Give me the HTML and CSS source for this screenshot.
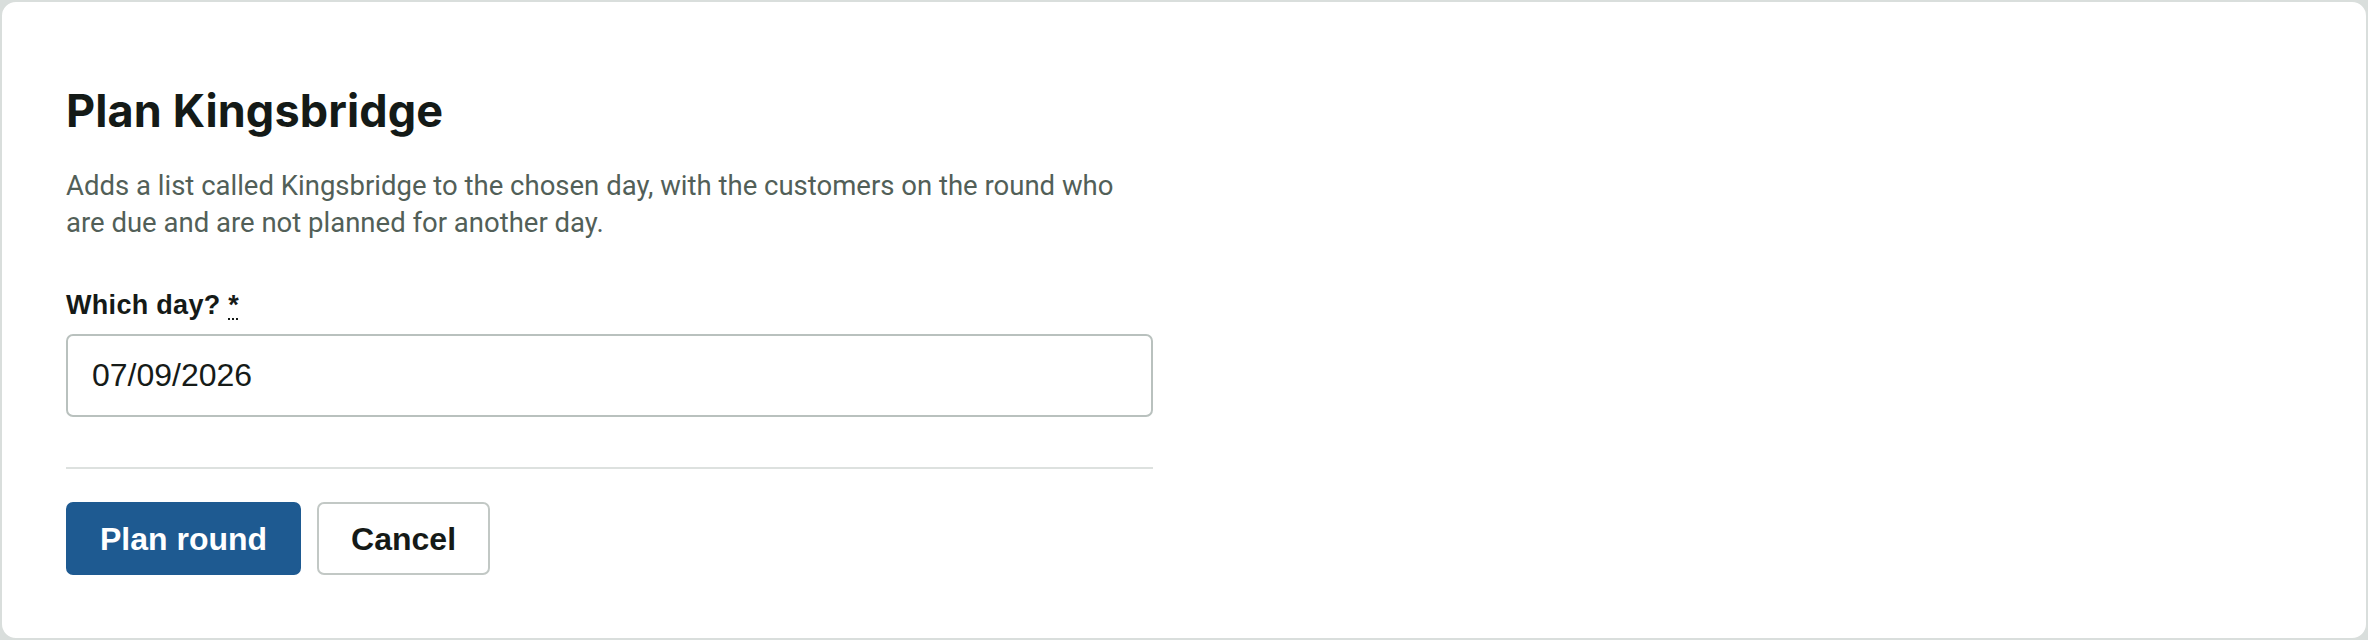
FILE: index.html
```html
<!DOCTYPE html>
<html lang="en">
<head>
<meta charset="utf-8">
<title>Plan Kingsbridge</title>
<link rel="stylesheet" href="styles.css">
</head>
<body>
<main class="card">
  <form class="form">
    <h1 class="title">Plan Kingsbridge</h1>
    <p class="lead">Adds a list called Kingsbridge to the chosen day, with the customers on the round who are due and are not planned for another day.</p>
    <div class="field">
      <label class="label" for="day">Which day? <abbr title="required">*</abbr></label>
      <input class="input" id="day" type="text" value="07/09/2026">
    </div>
    <hr class="rule">
    <div class="actions">
      <button type="button" class="btn btn-primary">Plan round</button>
      <button type="button" class="btn btn-secondary">Cancel</button>
    </div>
  </form>
</main>
</body>
</html>
```
FILE: styles.css
```css
html, body {
  margin: 0;
  padding: 0;
  background: #d9dedc;
}
body {
  font-family: Roboto, "Liberation Sans", Arial, sans-serif;
  color: #151a17;
}
.card {
  box-sizing: border-box;
  height: 640px;
  background: #ffffff;
  border: 2px solid #d9dedc;
  border-radius: 16px;
  padding: 82px 64px 0;
}
.form {
  display: flex;
  flex-direction: column;
  width: 1087px;
}
.title {
  margin: 0;
  font-family: Inter, "Liberation Sans", sans-serif;
  font-weight: 700;
  font-size: 45px;
  line-height: 53px;
  letter-spacing: 0.1px;
  color: #141a17;
}
.lead {
  margin: 30px 0 0;
  font-size: 27.5px;
  line-height: 37px;
  color: #525f58;
}
.field {
  display: flex;
  flex-direction: column;
  margin-top: 46px;
  gap: 10px;
}
.label {
  font-family: "Liberation Sans", Arial, sans-serif;
  font-size: 27px;
  line-height: 37px;
  font-weight: 700;
  letter-spacing: 0.3px;
  color: #151a17;
}
.label abbr {
  text-decoration: underline dotted;
  text-decoration-thickness: 2px;
  text-underline-offset: 4px;
  cursor: help;
}
.input {
  box-sizing: border-box;
  height: 83px;
  width: 100%;
  margin: 0;
  padding: 0 24px;
  border: 2px solid #b9c1be;
  border-radius: 7px;
  background: #fff;
  font-family: "Liberation Sans", Arial, sans-serif;
  font-size: 32px;
  color: #161b18;
  outline: none;
}
.rule {
  width: 100%;
  margin: 50px 0 0;
  border: 0;
  height: 2px;
  background: #dde1df;
}
.actions {
  display: flex;
  gap: 16px;
  margin-top: 33px;
}
.btn {
  box-sizing: border-box;
  height: 73px;
  padding: 0 32px;
  border-radius: 7px;
  border: 2px solid transparent;
  font-family: "Liberation Sans", Arial, sans-serif;
  font-weight: 700;
  font-size: 32px;
  line-height: 1;
  cursor: pointer;
}
.btn-primary {
  background: #1e5a91;
  border-color: #1e5a91;
  color: #ffffff;
}
.btn-secondary {
  background: #ffffff;
  border-color: #c2c8c5;
  color: #151a17;
}
```
